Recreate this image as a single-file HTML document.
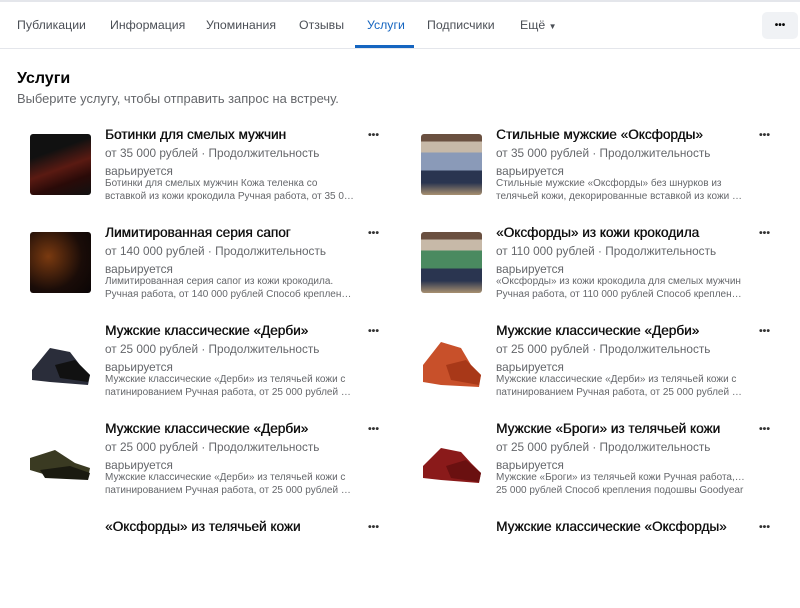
<!DOCTYPE html>
<html><head><meta charset="utf-8"><style>
*{margin:0;padding:0;box-sizing:border-box}
body{width:800px;height:535px;overflow:hidden;background:#fff;font-family:"Liberation Sans",sans-serif;color:#050505;position:relative}
.top{position:absolute;left:0;top:0;width:800px;height:2px;background:#e4e6eb}
.tabs{position:absolute;left:0;top:0;width:800px;height:49px;border-bottom:1px solid #e4e6eb}
.tab{position:absolute;top:18px;font-size:12.3px;color:#4b4f56}
.tab.act{color:#1565c0}
.ul{position:absolute;left:355px;top:45px;width:59px;height:3px;background:#1565c0}
.more{position:absolute;left:762px;top:12px;width:36px;height:27px;background:#f0f2f5;border-radius:5px;font-size:10px;font-weight:bold;text-align:center;line-height:27px}
h1{position:absolute;left:17px;top:70px;font-size:16px;font-weight:bold}
.sub{position:absolute;left:17px;top:91px;font-size:12.9px;color:#65676b}
.it{position:absolute;width:330px;height:90px}
.img{position:absolute;left:0;top:8px;width:61px;height:61px;border-radius:3px;overflow:hidden}
.t{position:absolute;left:75px;top:1px;font-size:13.6px;white-space:nowrap;color:#111;text-shadow:0.4px 0 0 #111}
.p{position:absolute;left:75px;top:18px;font-size:11.8px;line-height:18px;color:#65676b;width:240px}
.d{position:absolute;left:75px;top:51px;font-size:10px;line-height:13px;color:#65676b;width:250px}
.d div{white-space:nowrap;overflow:hidden;text-overflow:ellipsis}
.dots{position:absolute;left:338px;top:3px;font-size:10.5px;font-weight:bold;color:#333}
</style></head><body>
<div class="tabs"></div><div class="top"></div>
<div class="tab" style="left:17px">Публикации</div>
<div class="tab" style="left:110px">Информация</div>
<div class="tab" style="left:206px">Упоминания</div>
<div class="tab" style="left:299px">Отзывы</div>
<div class="tab act" style="left:367px">Услуги</div>
<div class="tab" style="left:427px">Подписчики</div>
<div class="tab" style="left:520px">Ещё <span style="font-size:8px">▼</span></div>
<div class="ul"></div>
<div class="more">•••</div>
<h1>Услуги</h1>
<div class="sub">Выберите услугу, чтобы отправить запрос на встречу.</div>

<div class="it" style="left:30px;top:126px"><div class="img" style="background:linear-gradient(160deg,#111 30%,#5a1a12 55%,#2a0a08 75%,#111)"></div><div class="t">Ботинки для смелых мужчин</div><div class="p">от 35 000 рублей · Продолжительность варьируется</div><div class="d"><div>Ботинки для смелых мужчин Кожа теленка со</div><div>вставкой из кожи крокодила Ручная работа, от 35 000 рублей</div></div><div class="dots">•••</div></div>
<div class="it" style="left:421px;top:126px"><div class="img" style="background:linear-gradient(180deg,#6a5040 0 12%,#c7b9a8 12% 30%,#8a9ab8 30% 60%,#2a3550 60% 80%,#a89070)"></div><div class="t">Стильные мужские «Оксфорды»</div><div class="p">от 35 000 рублей · Продолжительность варьируется</div><div class="d"><div>Стильные мужские «Оксфорды» без шнурков из</div><div>телячьей кожи, декорированные вставкой из кожи крокодила</div></div><div class="dots">•••</div></div>

<div class="it" style="left:30px;top:224px"><div class="img" style="background:radial-gradient(circle at 30% 40%,#7a3a10,#1a0c08 60%,#0a0505)"></div><div class="t">Лимитированная серия сапог</div><div class="p">от 140 000 рублей · Продолжительность варьируется</div><div class="d"><div>Лимитированная серия сапог из кожи крокодила.</div><div>Ручная работа, от 140 000 рублей Способ крепления подошвы</div></div><div class="dots">•••</div></div>
<div class="it" style="left:421px;top:224px"><div class="img" style="background:linear-gradient(180deg,#6a5040 0 12%,#c7b9a8 12% 30%,#4a8a60 30% 60%,#2a3550 60% 80%,#a89070)"></div><div class="t">«Оксфорды» из кожи крокодила</div><div class="p">от 110 000 рублей · Продолжительность варьируется</div><div class="d"><div>«Оксфорды» из кожи крокодила для смелых мужчин</div><div>Ручная работа, от 110 000 рублей Способ крепления подошвы</div></div><div class="dots">•••</div></div>

<div class="it" style="left:30px;top:322px"><div class="img"><svg width="61" height="61"><path d="M2 40 L20 18 L40 22 L50 35 L60 45 L58 55 L20 52 L2 50Z" fill="#2a2d3a"/><path d="M25 35 L45 30 L60 45 L58 52 L30 48Z" fill="#111"/></svg></div><div class="t">Мужские классические «Дерби»</div><div class="p">от 25 000 рублей · Продолжительность варьируется</div><div class="d"><div>Мужские классические «Дерби» из телячьей кожи с</div><div>патинированием Ручная работа, от 25 000 рублей Способ</div></div><div class="dots">•••</div></div>
<div class="it" style="left:421px;top:322px"><div class="img"><svg width="61" height="61"><path d="M2 35 L20 12 L40 18 L50 35 L60 45 L58 57 L20 55 L2 52Z" fill="#c8502a"/><path d="M25 35 L45 30 L60 45 L58 55 L30 50Z" fill="#a83818"/></svg></div><div class="t">Мужские классические «Дерби»</div><div class="p">от 25 000 рублей · Продолжительность варьируется</div><div class="d"><div>Мужские классические «Дерби» из телячьей кожи с</div><div>патинированием Ручная работа, от 25 000 рублей Способ</div></div><div class="dots">•••</div></div>

<div class="it" style="left:30px;top:420px"><div class="img"><svg width="61" height="61"><path d="M0 30 L25 22 L45 35 L60 40 L58 50 L20 48 L0 42Z" fill="#3a3a22"/><path d="M10 42 L40 38 L60 45 L58 52 L15 50Z" fill="#1a1a10"/></svg></div><div class="t">Мужские классические «Дерби»</div><div class="p">от 25 000 рублей · Продолжительность варьируется</div><div class="d"><div>Мужские классические «Дерби» из телячьей кожи с</div><div>патинированием Ручная работа, от 25 000 рублей Способ</div></div><div class="dots">•••</div></div>
<div class="it" style="left:421px;top:420px"><div class="img"><svg width="61" height="61"><path d="M2 38 L20 20 L40 24 L50 35 L60 45 L58 55 L20 52 L2 50Z" fill="#8a1a1a"/><path d="M25 38 L45 32 L60 45 L58 54 L30 50Z" fill="#6a1010"/></svg></div><div class="t">Мужские «Броги» из телячьей кожи</div><div class="p">от 25 000 рублей · Продолжительность варьируется</div><div class="d"><div>Мужские «Броги» из телячьей кожи Ручная работа, от</div><div>25 000 рублей Способ крепления подошвы Goodyear</div></div><div class="dots">•••</div></div>

<div class="it" style="left:30px;top:518px"><div class="t">«Оксфорды» из телячьей кожи</div><div class="dots">•••</div></div>
<div class="it" style="left:421px;top:518px"><div class="t">Мужские классические «Оксфорды»</div><div class="dots">•••</div></div>
</body></html>
